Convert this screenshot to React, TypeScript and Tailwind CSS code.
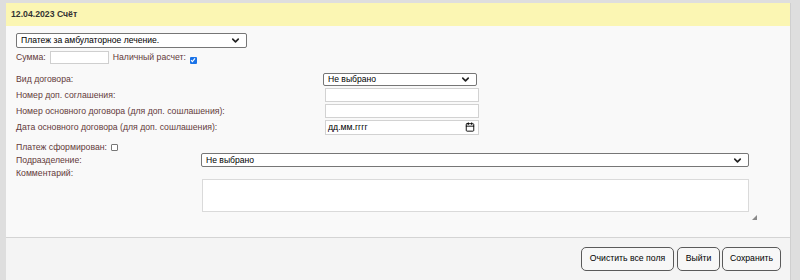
import { ChevronDown, Calendar } from "lucide-react";

const font = { fontFamily: '"Liberation Sans", Arial, sans-serif' };

const Select = ({ text, className }: { text: string; className: string }) => (
  <div
    className={`flex items-center justify-between bg-white border border-[#767676] rounded-[2px] pl-[4px] pr-[5px] text-[8.6px] text-black ${className}`}
  >
    <span className="leading-none">{text}</span>
    <ChevronDown size={11} strokeWidth={3.5} className="text-[#222]" />
  </div>
);

const Label = ({ children, className = "" }: { children: React.ReactNode; className?: string }) => (
  <span className={`text-[8.7px] leading-none text-[#633a3a] whitespace-nowrap ${className}`}>{children}</span>
);

const Check = ({ checked }: { checked?: boolean }) =>
  checked ? (
    <span className="inline-flex w-[7px] h-[7px] bg-[#1a73e8] rounded-[1px] items-center justify-center">
      <svg width="6" height="6" viewBox="0 0 6 6">
        <path d="M1 3.2 L2.4 4.6 L5 1.4" stroke="white" strokeWidth="1.1" fill="none" />
      </svg>
    </span>
  ) : (
    <span className="inline-block w-[7px] h-[7px] border border-[#777] rounded-[1px] bg-white" />
  );

const Btn = ({ children, className }: { children: React.ReactNode; className: string }) => (
  <button
    className={`h-[24px] border border-[#5a5a5a] rounded-[5px] bg-[#f7f7f7] text-[8.7px] text-black flex items-center justify-center whitespace-nowrap ${className}`}
  >
    {children}
  </button>
);

export default function App() {
  return (
    <div className="h-[280px] w-[800px] bg-[#dedede] pt-[3px] pl-[6px]" style={font}>
      <div className="w-[785px] h-[277px] flex flex-col border-r border-[#cfcfcf]">
        <div className="h-[23px] bg-[#fbf6b3] flex items-center pl-[5px] text-[8.7px] font-bold text-[#333]">
          12.04.2023 Счёт
        </div>

        <div className="h-[212px] bg-[#f9f9f9] border-b border-[#d4d4d4] pl-[10px] pt-[7px] flex flex-col">
          <Select text="Платеж за амбулаторное лечение." className="w-[231px] h-[15px]" />

          <div className="flex items-center h-[13px] mt-[3px]">
            <Label>Сумма:</Label>
            <div className="ml-[4px] w-[59px] h-[13px] bg-white border border-[#cfcfcf]" />
            <Label className="ml-[4px]">Наличный расчет:</Label>
            <span className="ml-[4px] mt-[5px] flex">
              <Check checked />
            </span>
          </div>

          <div className="grid grid-cols-[307px_1fr] mt-[7px]">
            <div className="h-[16px] flex items-center">
              <Label>Вид договора:</Label>
            </div>
            <div className="h-[16px] flex items-center">
              <Select text="Не выбрано" className="w-[154px] h-[13px]" />
            </div>

            <div className="h-[16px] flex items-center">
              <Label>Номер доп. соглашения:</Label>
            </div>
            <div className="h-[16px] flex items-center pl-[2px]">
              <div className="w-[154px] h-[14px] bg-white border border-[#d2d2d2]" />
            </div>

            <div className="h-[16px] flex items-center">
              <Label>Номер основного договора (для доп. сошлашения):</Label>
            </div>
            <div className="h-[16px] flex items-center pl-[2px]">
              <div className="w-[154px] h-[14px] bg-white border border-[#d2d2d2]" />
            </div>

            <div className="h-[16px] flex items-center">
              <Label>Дата основного договора (для доп. сошлашения):</Label>
            </div>
            <div className="h-[16px] flex items-center pl-[2px]">
              <div className="w-[154px] h-[15px] bg-white border border-[#d2d2d2] flex items-center justify-between pl-[2px] pr-[3px]">
                <span className="text-[8.7px] leading-none text-black">дд.мм.гггг</span>
                <Calendar size={10} strokeWidth={2.2} className="text-black" />
              </div>
            </div>
          </div>

          <div className="flex items-center h-[12px] mt-[6px]">
            <Label>Платеж сформирован:</Label>
            <span className="ml-[4px] flex">
              <Check />
            </span>
          </div>

          <div className="grid grid-cols-[185px_1fr] h-[13px]">
            <div className="flex items-center">
              <Label>Подразделение:</Label>
            </div>
            <Select text="Не выбрано" className="w-[548px] h-[14px] border-[#8a8a8a]" />
          </div>

          <div className="h-[12px] flex items-center mt-[1px]">
            <Label>Комментарий:</Label>
          </div>

          <div className="flex pl-[186px]">
            <div className="relative">
              <div className="w-[547px] h-[33px] bg-white border border-[#dadada]" />
              <svg
                className="absolute left-[550px] top-[36px]"
                width="5"
                height="5"
                viewBox="0 0 5 5"
              >
                <path d="M5 0 L5 5 L0 5 Z" fill="#8a8a8a" />
              </svg>
            </div>
          </div>
        </div>

        <div className="flex-1 bg-[#f4f4f4] flex justify-end items-start pt-[9px] pr-[9px]">
          <Btn className="w-[93px]">Очистить все поля</Btn>
          <Btn className="w-[43px] ml-[3px]">Выйти</Btn>
          <Btn className="w-[59px] ml-[2px]">Сохранить</Btn>
        </div>
      </div>
    </div>
  );
}
